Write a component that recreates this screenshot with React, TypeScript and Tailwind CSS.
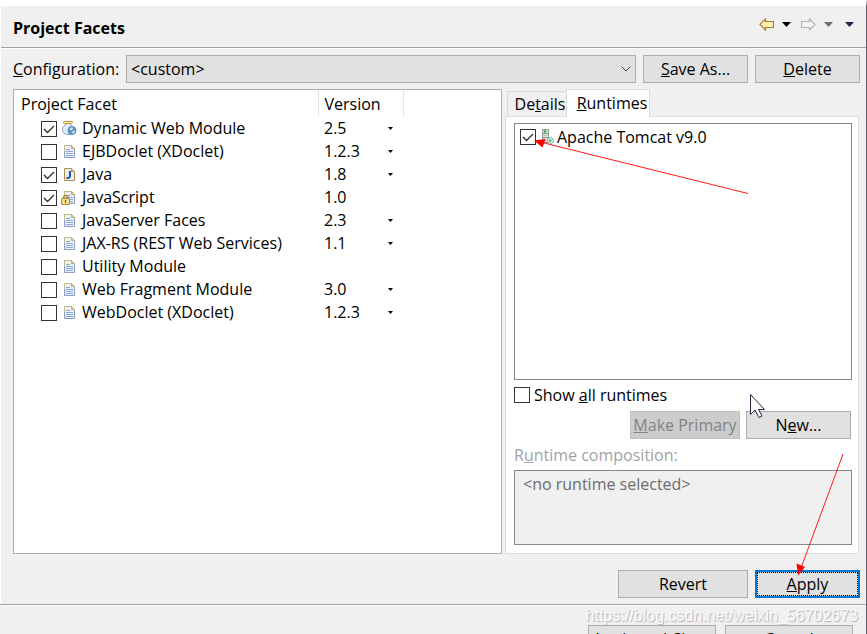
import { useState } from "react";
import type { ButtonHTMLAttributes, ReactNode } from "react";

type IconName = "web" | "page" | "java" | "script";

type Facet = {
  name: string;
  icon: IconName;
  enabled: boolean;
  version?: string;
  selectable?: boolean;
};

const facets: Facet[] = [
  { name: "Dynamic Web Module", icon: "web", enabled: true, version: "2.5", selectable: true },
  { name: "EJBDoclet (XDoclet)", icon: "page", enabled: false, version: "1.2.3", selectable: true },
  { name: "Java", icon: "java", enabled: true, version: "1.8", selectable: true },
  { name: "JavaScript", icon: "script", enabled: true, version: "1.0" },
  { name: "JavaServer Faces", icon: "page", enabled: false, version: "2.3", selectable: true },
  { name: "JAX-RS (REST Web Services)", icon: "page", enabled: false, version: "1.1", selectable: true },
  { name: "Utility Module", icon: "page", enabled: false },
  { name: "Web Fragment Module", icon: "page", enabled: false, version: "3.0", selectable: true },
  { name: "WebDoclet (XDoclet)", icon: "page", enabled: false, version: "1.2.3", selectable: true },
];

const PageShape = () => (
  <>
    <path d="M3.5 1.5h7l3 3v9h-10z" fill="#e9f1fb" stroke="#8d9cc0" />
    <path d="M3.5 7V1.5h7" fill="none" stroke="#c9b88a" />
    <path d="M10.5 1.5v3h3z" fill="#e3c987" stroke="#c9ae6c" />
    <path d="M5 5.5h4M5 7.5h7M5 9.5h7M5 11.5h7" stroke="#8ea6d2" />
  </>
);

const FacetIcon = ({ name }: { name: IconName }) => (
  <svg viewBox="0 0 16 16" className="h-4 w-4 flex-none" aria-hidden="true">
    {name === "page" && <PageShape />}
    {name === "java" && (
      <>
        <path d="M3.5 1.5h7l3 3v9h-10z" fill="#e6eefa" stroke="#b0904a" />
        <path d="M10.5 1.5v3h3z" fill="#f0d690" stroke="#c29c4c" />
        <path d="M9 4v5q0 2.500-3.500 2" fill="none" stroke="#1f5796" strokeWidth="2" />
      </>
    )}
    {name === "script" && (
      <>
        <PageShape />
        <path d="M2.500 9V7.500q0-2 2-2t2 2V9" fill="none" stroke="#b58a1c" strokeWidth="1.300" />
        <rect x="0.500" y="8.500" width="8" height="6" rx="0.500" fill="#f8dd8c" stroke="#b88a20" />
        <path d="M4.500 10v3" stroke="#7a5200" />
      </>
    )}
    {name === "web" && (
      <>
        <path
          d="M4.500 2v2C2.500 5 1.500 6.500 1.500 8.500c0 3 2 5 5.500 5s5.500-2 5.500-5c0-2-1-3.500-3-4.500V2z"
          fill="#e3edf7"
          stroke="#8ba6c8"
        />
        <rect x="2.500" y="0.500" width="9" height="2" rx="1" fill="#fdf0be" stroke="#c6962a" />
        <circle cx="11" cy="9.500" r="4" fill="#5b93cf" stroke="#5b86bb" />
        <path d="M9 7.500l2-1.500 1 1.500-1.500 2L9 9zM12 10l2-.5-.5 2-1.500 1.500-1-1.500z" fill="#d5ecd8" />
      </>
    )}
  </svg>
);

const ServerIcon = () => (
  <svg viewBox="0 0 16 16" className="h-4 w-4 flex-none" aria-hidden="true">
    <path d="M2.500.5h6v13h-6z" fill="#d5dfd5" stroke="#8e9c93" />
    <path d="M3 4.500h5M3 8.500h5" stroke="#8e9c93" />
    <path d="M4 2.500h2" stroke="#19a34a" strokeWidth="2" />
    <path d="M4 6.500h3M4 10.500h2" stroke="#b7c3bb" />
    <circle cx="10.500" cy="11.500" r="3" fill="#e4f5ea" stroke="#6fb296" />
    <path d="M9.500 10l2.500 1.500L9.500 13z" fill="#2b8c60" />
  </svg>
);

const CheckBox = ({ id, initial = false }: { id: string; initial?: boolean }) => {
  const [checked, setChecked] = useState(initial);
  return (
    <span className="grid h-4 w-4 flex-none">
      <input
        id={id}
        type="checkbox"
        checked={checked}
        onChange={() => setChecked(!checked)}
        className="col-start-1 row-start-1 h-4 w-4 appearance-none border border-[#333333] bg-white"
      />
      {checked && (
        <svg viewBox="0 0 16 16" className="pointer-events-none col-start-1 row-start-1 h-4 w-4">
          <path d="M3 8l3.500 3.500L13 5" fill="none" stroke="#333333" strokeWidth="1.400" />
        </svg>
      )}
    </span>
  );
};

const Caret = ({ className }: { className: string }) => (
  <svg viewBox="0 0 9 5" className={className} fill="currentColor" aria-hidden="true">
    <path d="M0 0h9L4.500 5z" />
  </svg>
);

const PushButton = ({
  className,
  children,
  ...rest
}: { className: string; children: ReactNode } & ButtonHTMLAttributes<HTMLButtonElement>) => (
  <button
    type="button"
    className={`flex-none border border-[#adadad] bg-[#e1e1e1] text-center whitespace-nowrap disabled:border-[#bfbfbf] disabled:bg-[#cccccc] disabled:text-[#838383] ${className}`}
    {...rest}
  >
    {children}
  </button>
);

const NavArrow = ({ stroke, fill, flip }: { stroke: string; fill: string; flip?: boolean }) => (
  <svg viewBox="0 0 15 13" className="h-[13px] w-[15px]" aria-hidden="true">
    <path
      d={flip ? "M14 6.500L8.500 1v2.500h-8v6h8V12z" : "M1 6.500L6.500 1v2.500h8v6h-8V12z"}
      fill={fill}
      stroke={stroke}
      strokeWidth="1.200"
    />
  </svg>
);

const Header = () => (
  <header className="flex h-[41px] items-center justify-between pr-3 pl-3">
    <h1 className="pt-0.5 font-bold">Project Facets</h1>
    <div className="flex items-center pb-1">
      <button type="button" aria-label="Back">
        <NavArrow stroke="#b8771a" fill="#fff0b8" />
      </button>
      <button type="button" aria-label="Back history" className="ml-2 text-black">
        <Caret className="h-[5px] w-[9px]" />
      </button>
      <button type="button" aria-label="Forward" className="ml-[10px]">
        <NavArrow stroke="#b4b4b4" fill="#f4f4f4" flip />
      </button>
      <button type="button" aria-label="Forward history" className="ml-2 text-[#6e6e6e]">
        <Caret className="h-[5px] w-[9px]" />
      </button>
      <button type="button" aria-label="Menu" className="ml-3 text-[#2c1f4a]">
        <Caret className="h-[5px] w-[9px]" />
      </button>
    </div>
  </header>
);

const FacetTable = () => (
  <div className="min-w-0 flex-1 border border-[#abadb3] bg-white">
    <table className="w-full table-fixed border-collapse">
      <colgroup>
        <col />
        <col className="w-[85px]" />
        <col className="w-[98px]" />
      </colgroup>
      <thead>
        <tr className="h-[27px] text-left">
          <th className="border-r border-[#e5e5e5] p-0 pl-[7px] font-normal">Project Facet</th>
          <th className="border-r border-[#e5e5e5] p-0 pl-1.5 font-normal">Version</th>
          <th className="p-0" />
        </tr>
      </thead>
      <tbody>
        {facets.map((facet, i) => (
          <tr key={facet.name} className="h-[23px]">
            <td className="p-0 pl-[27px]">
              <div className="flex items-center whitespace-nowrap">
                <CheckBox id={`facet-${i}`} initial={facet.enabled} />
                <label htmlFor={`facet-${i}`} className="flex items-center gap-[5px] pl-1 leading-[23px]">
                  <FacetIcon name={facet.icon} />
                  {facet.name}
                </label>
              </div>
            </td>
            <td className="p-0 pr-2.5 pl-1.5">
              <div className="flex items-center justify-between leading-[23px]">
                {facet.version}
                {facet.selectable && (
                  <button type="button" aria-label={`Change version of ${facet.name}`}>
                    <Caret className="h-[3px] w-[5px]" />
                  </button>
                )}
              </div>
            </td>
            <td className="p-0" />
          </tr>
        ))}
      </tbody>
    </table>
  </div>
);

const RuntimesPanel = () => (
  <div className="flex w-[354px] flex-none flex-col">
    <div role="tablist" className="flex h-[27px] items-end pl-0.5">
      <button
        type="button"
        role="tab"
        aria-selected="false"
        className="h-[25px] w-[59px] border border-r-0 border-b-0 border-[#d9d9d9] pl-1.5 leading-6"
      >
        De<u>t</u>ails
      </button>
      <button
        type="button"
        role="tab"
        aria-selected="true"
        className="z-10 -mb-px h-7 w-[84px] border border-b-0 border-[#d9d9d9] bg-white pb-0.5 pl-2 leading-6"
      >
        <u>R</u>untimes
      </button>
    </div>
    <div role="tabpanel" className="border border-[#dcdcdc] bg-white pt-1.5 pr-1.5 pb-2 pl-2">
      <div className="h-[257px] border border-[#828790] p-[5px]">
        <div className="flex items-center">
          <CheckBox id="tomcat" initial />
          <label htmlFor="tomcat" className="flex items-center gap-px pl-1 leading-4">
            <ServerIcon />
            Apache Tomcat v9.0
          </label>
        </div>
      </div>
      <div className="mt-[7px] flex h-4 items-center gap-1">
        <CheckBox id="show-all" />
        <label htmlFor="show-all">
          Show <u>a</u>ll runtimes
        </label>
      </div>
      <div className="mt-2 flex justify-end gap-1.5 pr-px">
        <PushButton className="h-7 w-[110px]" disabled>
          <u>M</u>ake Primary
        </PushButton>
        <PushButton className="h-7 w-[105px]">
          N<u>e</u>w...
        </PushButton>
      </div>
      <label htmlFor="composition" className="mt-1 block leading-6 text-[#a3a3a3]">
        R<u>u</u>ntime composition:
      </label>
      <textarea
        id="composition"
        disabled
        defaultValue="<no runtime selected>"
        className="mt-[3px] block h-[75px] w-full resize-none border border-[#828790] bg-[#f0f0f0] px-2 py-px leading-6 text-[#6d6d6d]"
      />
    </div>
  </div>
);

// Red pointers and the mouse cursor float over the dialog
const Annotations = () => (
  <svg
    className="pointer-events-none absolute -top-1.5 left-0 z-20 h-[634px] w-[867px]"
    viewBox="0 0 867 634"
  >
    <path d="M748 193.500L540 142M843 454L801 568" stroke="#ff1a1a" fill="none" />
    <path d="M534 140.500l11.500-1.500-3 8.500zM798 575.500l-1.500-12 8.500 3.500z" fill="#ff0000" />
    <path
      d="M750.500 394.500v20l4.500-4.500 4 7.500 3-1.500-3.500-6.500h6z"
      fill="#ffffff"
      stroke="#23233a"
    />
  </svg>
);

export default function App() {
  return (
    <div className="relative h-screen overflow-hidden border-t-[6px] border-r border-t-white border-r-[#5f5f66] bg-[#f0f0f0] font-['Open_Sans','Noto_Sans',sans-serif] text-[16px] leading-6 text-black">
      <main className="border-l border-white">
        <Header />
        <div className="h-0.5 border-t border-[#a0a0a0] bg-white" />
        <div className="pt-1.5 pr-1.5 pb-1.5 pl-3">
          <div className="flex items-center gap-[7px]">
            <div className="flex min-w-0 flex-1 items-center">
              <label htmlFor="configuration" className="w-[113px] flex-none">
                <u>C</u>onfiguration:
              </label>
              <div className="grid min-w-0 flex-1 items-center">
                <select
                  id="configuration"
                  className="col-start-1 row-start-1 h-7 appearance-none border border-[#adadad] bg-[#e1e1e1] px-1"
                >
                  <option>&lt;custom&gt;</option>
                </select>
                <svg
                  viewBox="0 0 10 6"
                  className="pointer-events-none col-start-1 row-start-1 mr-[5px] h-1.5 w-2.5 justify-self-end"
                >
                  <path d="M.5.5L5 5 9.500.5" fill="none" stroke="#444444" />
                </svg>
              </div>
            </div>
            <PushButton className="h-7 w-[105px]">
              <u>S</u>ave As...
            </PushButton>
            <PushButton className="h-7 w-[105px]">
              <u>D</u>elete
            </PushButton>
          </div>
          <div className="mt-1.5 flex gap-[3px] pr-px">
            <FacetTable />
            <RuntimesPanel />
          </div>
          <div className="mt-4 flex justify-end gap-[7px]">
            <PushButton className="h-7 w-[130px]">Revert</PushButton>
            <button
              type="button"
              className="h-7 w-[105px] border-2 border-[#0078d7] bg-[#e1e1e1] leading-[22px] outline-1 -outline-offset-3 outline-dotted outline-black"
            >
              <u>A</u>pply
            </button>
          </div>
        </div>
      </main>
      <div className="h-0.5 border-t border-[#a0a0a0] bg-white" />
      <footer className="flex justify-end gap-[9px] pt-[19px] pr-[13px]">
        <PushButton className="h-7 w-[128px]">Apply and Close</PushButton>
        <PushButton className="h-7 w-[128px]">Cancel</PushButton>
      </footer>
      <p className="absolute right-2 bottom-1.5 font-['Liberation_Sans',sans-serif] text-[16px] text-[#fafafa] [text-shadow:1px_1px_1px_#b0b0b0]">
        https://blog.csdn.net/weixin_56702673
      </p>
      <Annotations />
    </div>
  );
}
